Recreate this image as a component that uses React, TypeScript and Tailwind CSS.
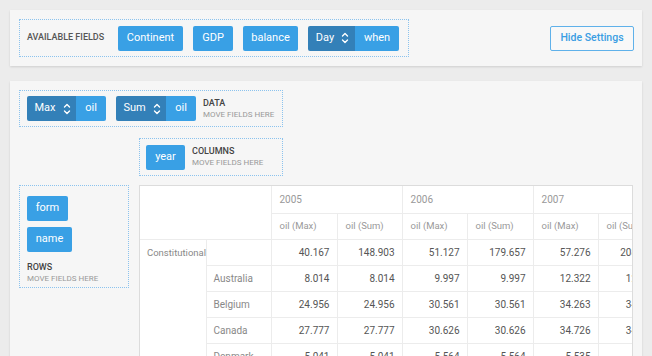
import React from "react";

const font = { fontFamily: "Roboto, 'Noto Sans', sans-serif" };

function UpDown() {
  return (
    <svg width="8" height="12" viewBox="0 0 8 12" fill="none" stroke="currentColor" strokeWidth="1.4" strokeLinecap="round" strokeLinejoin="round">
      <path d="M1.5 4 L4 1.5 L6.5 4" />
      <path d="M1.5 8 L4 10.5 L6.5 8" />
    </svg>
  );
}

function Field({ label, w }: { label: string; w: string }) {
  return (
    <div className={`flex h-[25px] ${w} items-center justify-center rounded-[2px] bg-[#39a0e5] text-[11px] text-white`}>
      {label}
    </div>
  );
}

function AggField({ agg, label, w1, w2 }: { agg: string; label: string; w1: string; w2: string }) {
  return (
    <div className="flex h-[25px] overflow-hidden rounded-[2px] text-[11px] text-white">
      <div className={`flex ${w1} items-center justify-center gap-[7px] bg-[#3380b8] pl-[2px]`}>
        <span>{agg}</span>
        <UpDown />
      </div>
      <div className={`flex ${w2} items-center justify-center bg-[#39a0e5]`}>{label}</div>
    </div>
  );
}

function DropLabel({ title }: { title: string }) {
  return (
    <div className="flex flex-col whitespace-nowrap leading-[11px]">
      <span className="text-[9px] font-medium text-[#444]">{title}</span>
      <span className="text-[8px] text-[#999]">MOVE FIELDS HERE</span>
    </div>
  );
}

const years = ["2005", "2006", "2007"];
const rows: [string, string[]][] = [
  ["Australia", ["8.014", "8.014", "9.997", "9.997", "12.322", "12.322"]],
  ["Belgium", ["24.956", "24.956", "30.561", "30.561", "34.263", "34.263"]],
  ["Canada", ["27.777", "27.777", "30.626", "30.626", "34.726", "34.726"]],
  ["Denmark", ["5.041", "5.041", "5.564", "5.564", "5.535", "5.535"]],
];
const totals = ["40.167", "148.903", "51.127", "179.657", "57.276", "208.188"];

export default function App() {
  const cell = "border-r border-b border-[#ececec]";
  return (
    <div className="h-[356px] w-[652px] overflow-hidden bg-[#ececec]" style={font}>
      {/* Settings bar */}
      <div className="mx-[10px] mt-[10px] flex h-[56px] items-center justify-between bg-[#f6f6f6] pl-[9px] pr-[8px] shadow-[0_1px_2px_rgba(0,0,0,0.12)]">
        <div className="flex h-[38px] w-[390px] items-center gap-[10px] border border-dotted border-[#8cc3ee] pl-[7px]">
          <span className="mr-[3px] w-[78px] whitespace-nowrap text-[9px] font-medium text-[#555]">AVAILABLE FIELDS</span>
          <Field label="Continent" w="w-[65px]" />
          <Field label="GDP" w="w-[40px]" />
          <Field label="balance" w="w-[55px]" />
          <AggField agg="Day" label="when" w1="w-[47px]" w2="w-[44px]" />
        </div>
        <div className="flex h-[25px] w-[84px] items-center justify-center rounded-[2px] border border-[#5fb1ea] bg-[#f8f8f8] text-[10.5px] font-medium text-[#3a9ee3]">
          Hide Settings
        </div>
      </div>

      {/* Pivot */}
      <div className="mx-[10px] mt-[15px] h-[300px] overflow-hidden bg-[#f6f6f6] px-[9px] pt-[9px] shadow-[0_1px_2px_rgba(0,0,0,0.12)]">
        <div className="flex h-[37px] w-[264px] items-center gap-[10px] border border-dotted border-[#8cc3ee] pl-[7px]">
          <AggField agg="Max" label="oil" w1="w-[49px]" w2="w-[30px]" />
          <AggField agg="Sum" label="oil" w1="w-[50px]" w2="w-[30px]" />
          <div className="ml-[-3px]">
            <DropLabel title="DATA" />
          </div>
        </div>

        <div className="mt-[11px] ml-[120px] flex h-[38px] w-[144px] items-center gap-[7px] border border-dotted border-[#8cc3ee] pl-[6px]">
          <Field label="year" w="w-[39px]" />
          <DropLabel title="COLUMNS" />
        </div>

        <div className="mt-[9px] grid grid-cols-[110px_494px] gap-[10px]">
          <div className="flex h-[103px] flex-col items-start border border-dotted border-[#8cc3ee] pl-[7px] pt-[10px]">
            <Field label="form" w="w-[41px]" />
            <div className="mt-[6px]">
              <Field label="name" w="w-[45px]" />
            </div>
            <div className="mt-[10px]">
              <DropLabel title="ROWS" />
            </div>
          </div>

          <div className="h-[200px] min-w-0 overflow-hidden border border-b-0 border-[#dcdcdc] bg-white">
            <table className="w-[524px] max-w-none table-fixed border-collapse text-[10px]">
              <colgroup>
                <col className="w-[66px]" />
                <col className="w-[65px]" />
                <col className="w-[66px]" />
                <col className="w-[65px]" />
                <col className="w-[65px]" />
                <col className="w-[66px]" />
                <col className="w-[65px]" />
                <col className="w-[66px]" />
              </colgroup>
              <thead>
                <tr className="h-[27px]">
                  <th colSpan={2} rowSpan={2} className={cell}></th>
                  {years.map((y) => (
                    <th key={y} colSpan={2} className={`${cell} pl-[8px] text-left font-normal text-[#999]`}>
                      {y}
                    </th>
                  ))}
                </tr>
                <tr className="h-[26px]">
                  {years.flatMap((y) => [
                    <th key={y + "m"} className={`${cell} overflow-hidden pl-[8px] text-left text-[9.5px] font-normal text-[#999] whitespace-nowrap`}>oil (Max)</th>,
                    <th key={y + "s"} className={`${cell} overflow-hidden pl-[8px] text-left text-[9.5px] font-normal text-[#999] whitespace-nowrap`}>oil (Sum)</th>,
                  ])}
                </tr>
              </thead>
              <tbody>
                <tr className="h-[26px]">
                  <td rowSpan={6} className={`${cell} pl-[7px] pt-[6px] align-top text-[9.5px] text-[#888] whitespace-nowrap`}>Constitutional</td>
                  <td className={cell}></td>
                  {totals.map((v, i) => (
                    <td key={i} className={`${cell} overflow-hidden pr-[7px] text-right text-[#555] whitespace-nowrap`}>{v}</td>
                  ))}
                </tr>
                {rows.map(([name, vals]) => (
                  <tr key={name} className="h-[26px]">
                    <td className={`${cell} pl-[7px] text-[#888]`}>{name}</td>
                    {vals.map((v, i) => (
                      <td key={i} className={`${cell} overflow-hidden pr-[7px] text-right text-[#555] whitespace-nowrap`}>{v}</td>
                    ))}
                  </tr>
                ))}
              </tbody>
            </table>
          </div>
        </div>
      </div>
    </div>
  );
}
